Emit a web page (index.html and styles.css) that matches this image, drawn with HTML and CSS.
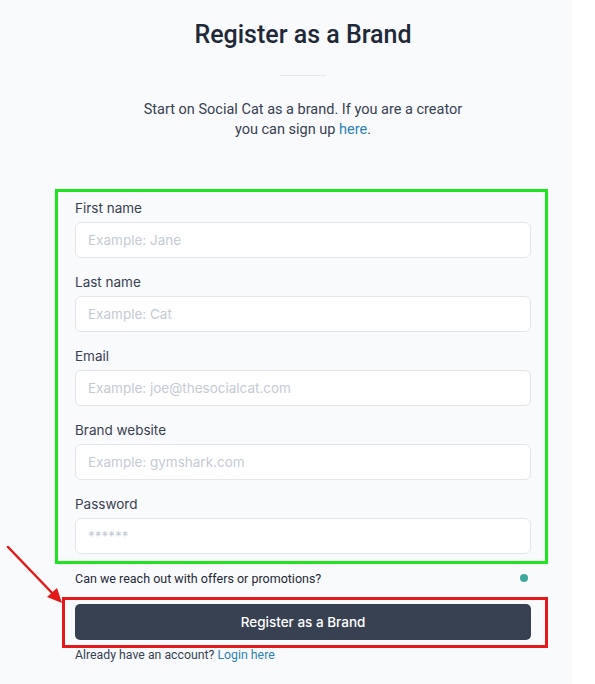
FILE: index.html
```html
<!DOCTYPE html>
<html lang="en">
<head>
<meta charset="utf-8">
<title>Register as a Brand</title>
<link rel="stylesheet" href="styles.css">
</head>
<body>
<div class="page">
  <svg class="arrow" width="70" height="70" viewBox="0 0 70 70">
    <line x1="8" y1="8" x2="55" y2="57" stroke="#e3191c" stroke-width="2.5" stroke-linecap="round"/>
    <polygon points="62,64 47,58 57,49" fill="#e3191c"/>
  </svg>
  <main class="inner">
    <h1 class="title">Register as a Brand</h1>
    <div class="divider"></div>
    <p class="subtitle">Start on Social Cat as a brand. If you are a creator<br>you can sign up <a href="#">here</a>.</p>
    <form class="form">
      <div class="fields">
        <span class="mark-green"></span>
        <label class="field">
          <span class="label">First name</span>
          <input class="input" type="text" placeholder="Example: Jane">
        </label>
        <label class="field">
          <span class="label">Last name</span>
          <input class="input" type="text" placeholder="Example: Cat">
        </label>
        <label class="field">
          <span class="label">Email</span>
          <input class="input" type="text" placeholder="Example: joe@thesocialcat.com">
        </label>
        <label class="field">
          <span class="label">Brand website</span>
          <input class="input" type="text" placeholder="Example: gymshark.com">
        </label>
        <label class="field">
          <span class="label">Password</span>
          <input class="input" type="text" placeholder="******">
        </label>
      </div>
      <div class="offers">
        <span>Can we reach out with offers or promotions?</span>
        <span class="dot"></span>
      </div>
      <div class="btn-wrap">
        <span class="mark-red"></span>
        <button class="btn" type="button">Register as a Brand</button>
      </div>
      <p class="login">Already have an account? <a href="#">Login here</a></p>
    </form>
  </main>
</div>
</body>
</html>
```

FILE: styles.css
```css
* { box-sizing: border-box; }
html, body { margin: 0; padding: 0; background: #ffffff; }
.page {
  position: relative;
  width: 572px;
  min-height: 684px;
  background: #f9fafb;
  padding-top: 19px;
}
.arrow {
  position: absolute;
  left: 0;
  top: 539px;
}
.inner {
  width: 456px;
  margin-left: 75px;
}
.title {
  margin: 0;
  text-align: center;
  font-family: Roboto, "Liberation Sans", sans-serif;
  font-weight: 500;
  font-size: 25px;
  line-height: 32px;
  color: #1f2937;
}
.divider {
  width: 46px;
  height: 1px;
  background: #e5e7eb;
  margin: 24px auto 0;
}
.subtitle {
  margin: 24px 0 0;
  text-align: center;
  font-family: Roboto, "Liberation Sans", sans-serif;
  font-size: 14.5px;
  line-height: 20px;
  color: #374151;
}
.subtitle a, .login a { color: #2f7fb8; text-decoration: none; }
.form { margin-top: 58px; }
.fields {
  position: relative;
  display: flex;
  flex-direction: column;
  gap: 14px;
}
.mark-green {
  position: absolute;
  left: -20px;
  right: -17px;
  top: -9px;
  bottom: -10px;
  border: 3px solid #1fe41f;
  pointer-events: none;
}
.field { display: flex; flex-direction: column; gap: 4px; }
.label {
  font-family: Inter, "Liberation Sans", sans-serif;
  font-size: 13.5px;
  line-height: 20px;
  color: #374151;
}
.input {
  height: 36px;
  width: 100%;
  border: 1px solid #e2e5ea;
  border-radius: 6px;
  background: #ffffff;
  padding: 0 12px;
  font-family: Inter, "Liberation Sans", sans-serif;
  font-size: 13.5px;
  color: #1f2937;
  outline: none;
}
.input::placeholder { color: #c5cbd4; }
.offers {
  margin-top: 15px;
  display: flex;
  justify-content: space-between;
  align-items: center;
  height: 18px;
  font-family: Roboto, "Liberation Sans", sans-serif;
  font-size: 12.5px;
  color: #1f2937;
}
.dot {
  width: 8px;
  height: 8px;
  border-radius: 50%;
  background: #3ea99c;
  margin-right: 3px;
}
.btn-wrap { position: relative; margin-top: 17px; }
.mark-red {
  position: absolute;
  left: -13px;
  right: -17px;
  top: -7px;
  bottom: -8px;
  border: 3px solid #e3191c;
  pointer-events: none;
}
.btn {
  display: block;
  width: 100%;
  height: 36px;
  border: none;
  border-radius: 5px;
  background: #374151;
  color: #ffffff;
  font-family: Inter, "Liberation Sans", sans-serif;
  font-weight: 500;
  font-size: 13.5px;
}
.login {
  margin: 7px 0 0;
  font-family: Roboto, "Liberation Sans", sans-serif;
  font-size: 12.3px;
  line-height: 16px;
  color: #374151;
}
```
